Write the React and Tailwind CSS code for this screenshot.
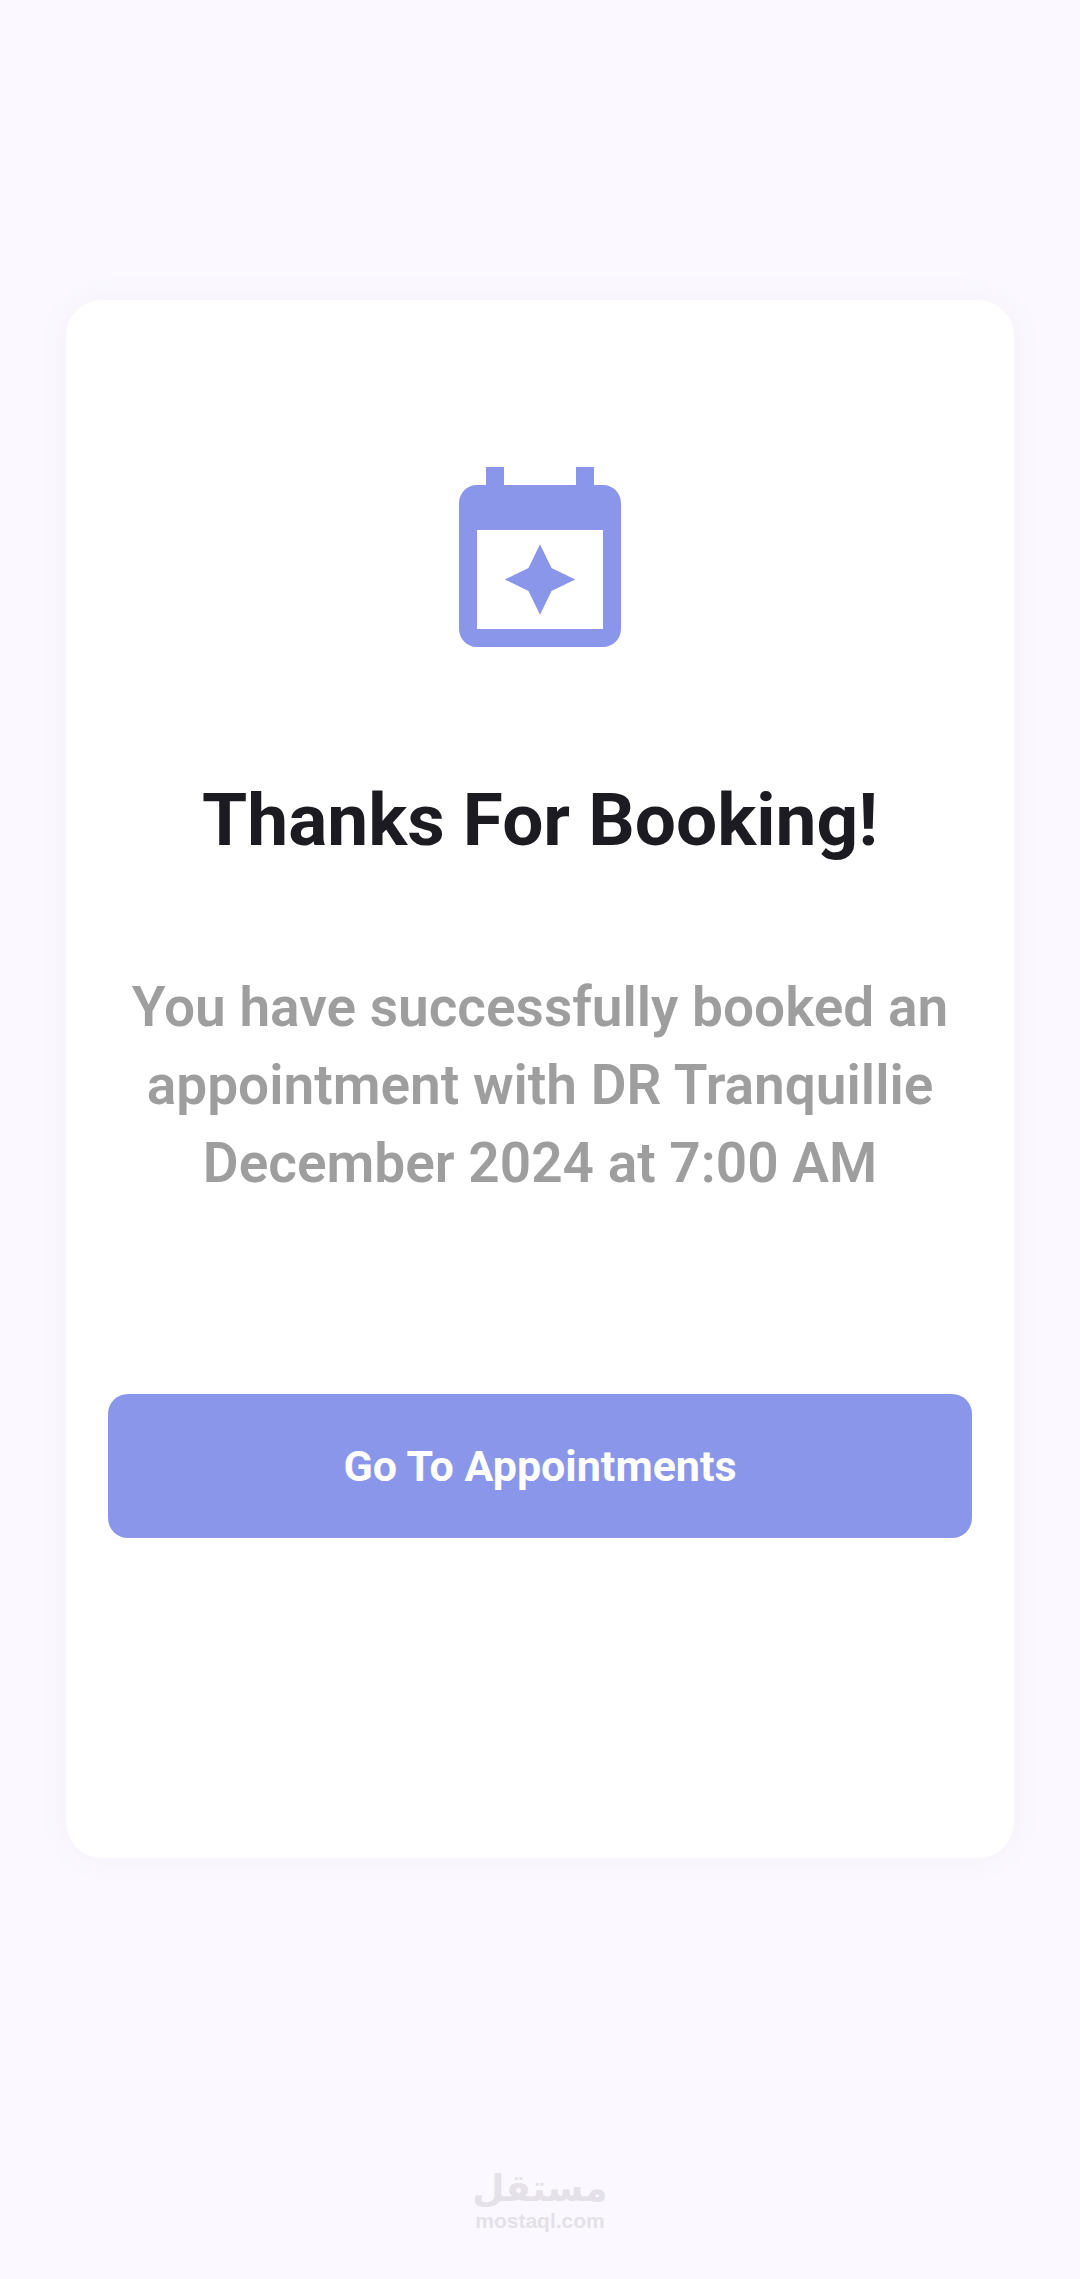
function EventIcon() {
  return (
    <svg viewBox="0 0 24 24" className="size-54 fill-[#8a96e9]" aria-hidden="true">
      <path
        fillRule="evenodd"
        d="M19 3H18V1H16V3H8V1H6V3H5C3.9 3 3 3.9 3 5V19C3 20.1 3.9 21 5 21H19C20.1 21 21 20.1 21 19V5C21 3.9 20.1 3 19 3ZM19 19H5V8H19ZM12 9.58L13.28 12.22L15.92 13.5L13.28 14.78L12 17.42L10.72 14.78L8.08 13.5L10.72 12.22Z"
      />
    </svg>
  );
}

export default function App() {
  return (
    <div className="flex min-h-screen flex-col bg-[#fbf9ff] px-[66px] pt-[300px] pb-11 font-['Roboto',sans-serif]">
      <main className="flex flex-col items-center rounded-[36px] bg-white px-[42px] pt-[158px] pb-80 text-center shadow-[0_0_30px_4px_rgba(90,60,150,0.04)]">
        <EventIcon />
        <h1 className="mt-[100px] text-[73px] leading-[92px] font-bold text-[#1b1b21]">
          Thanks For Booking!
        </h1>
        <p className="mt-[102px] text-[55px] leading-[78px] font-semibold text-[#9e9e9e]">
          You have successfully booked an
          <br />
          appointment with DR Tranquillie
          <br />
          December 2024 at 7:00 AM
        </p>
        <button
          type="button"
          className="mt-48 h-36 w-full rounded-[20px] bg-[#8a96e9] text-[43px] font-bold text-white"
        >
          Go To Appointments
        </button>
      </main>
      <footer className="mt-auto flex flex-col items-center text-[#e4e1e9]">
        <span lang="ar" dir="rtl" className="font-['DejaVu_Sans',sans-serif] text-[37px] leading-9 font-bold">
          مستقل
        </span>
        <span className="font-['Liberation_Sans',sans-serif] text-[21px] leading-7 font-bold">mostaql.com</span>
      </footer>
    </div>
  );
}
